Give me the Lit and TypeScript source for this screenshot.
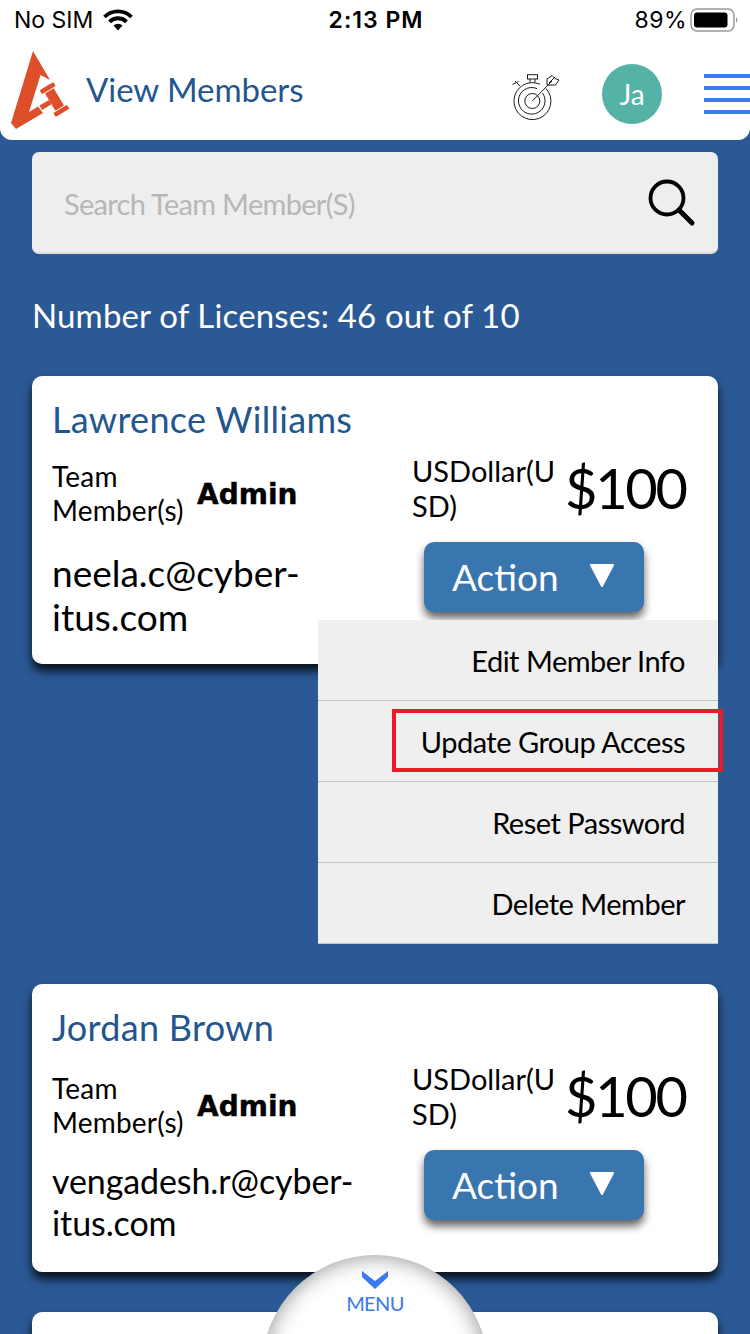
import { LitElement, html, css, svg } from "lit";
import { customElement } from "lit/decorators.js";

type Member = { name: string; email: string; open?: boolean; shifted?: boolean };

const MEMBERS: Member[] = [
  { name: "Lawrence Williams", email: "neela.c@cyber-itus.com", open: true },
  { name: "Jordan Brown", email: "vengadesh.r@cyber-itus.com", shifted: true },
];

const MENU_ITEMS = ["Edit Member Info", "Update Group Access", "Reset Password", "Delete Member"];

const logo = svg`
  <path fill="#dd4f2b" d="M33 51 L50 80 L40.500 75 L29 112 L38 106.500 L43 113 L16 129 L11 123 Z" />
  <g transform="translate(54.5 99.5) rotate(-31)" fill="#dd4f2b">
    <rect x="-5" y="-10" width="10" height="20" />
    <rect x="-8" y="-15.5" width="16" height="4.5" rx="1" />
    <rect x="-8" y="11" width="16" height="4.5" rx="1" />
    <rect x="-16" y="-2.500" width="11" height="5" />
  </g>`;

const target = svg`
  <g fill="none" stroke="#1c1c1c" stroke-width="1">
    <path d="M546 88.5 A18.5 18.5 0 1 1 540 84.2" />
    <path d="M542.5 93 A13.3 13.3 0 1 1 537 88.6" />
    <circle cx="532.3" cy="101" r="7.5" />
    <rect x="527.5" y="74.7" width="10" height="4.3" />
    <path d="M530 79 V82.5 M535 79 V82.5" />
    <path d="M520 86 L515 81 M512.5 84.5 L518.5 81.5" />
    <path d="M532.3 101 L552 81" />
    <path d="M547 85 L547 79 L552 75.5 L555 78.5 L559 80 L555.5 85 L550 85 Z" />
    <path d="M549 83 L555 77" />
  </g>`;

@customElement("app-root")
export class AppRoot extends LitElement {
  static styles = css`
    :host {
      display: block;
      position: relative;
      width: 750px;
      height: 1334px;
      overflow: hidden;
      background: #2a5995;
      font-family: "Lato", "Liberation Sans", sans-serif;
      color: #000;
    }
    header {
      background: #fff;
      height: 140px;
      border-radius: 0 0 12px 12px;
    }
    .status {
      height: 40px;
      display: grid;
      grid-template-columns: 1fr auto 1fr;
      align-items: center;
      padding: 0 12px 0 14px;
      font-family: "Inter", "Liberation Sans", sans-serif;
      font-size: 23px;
      color: #000;
    }
    .status .left,
    .status .right {
      display: flex;
      align-items: center;
      gap: 10px;
    }
    .status .right {
      justify-content: flex-end;
      gap: 3px;
      letter-spacing: 0.5px;
    }
    .status .time {
      font-weight: 600;
      letter-spacing: 1px;
    }
    .nav {
      height: 100px;
      display: flex;
      align-items: center;
      position: relative;
    }
    .logo {
      width: 64px;
      height: 84px;
      margin: 0 0 0 8px;
      flex: none;
    }
    .title {
      font-size: 33px;
      color: #23568f;
      margin-left: 14px;
      letter-spacing: -0.05px;
      margin-top: -2px;
      flex: 1;
    }
    .target {
      width: 60px;
      height: 60px;
      flex: none;
      margin-top: 10px;
    }
    .avatar {
      width: 60px;
      height: 60px;
      border-radius: 50%;
      background: #54b2a6;
      color: #fff;
      font-size: 28px;
      display: flex;
      align-items: center;
      justify-content: center;
      margin: 8px 0 0 37px;
      flex: none;
    }
    .burger {
      width: 46px;
      margin: 8px 0 0 42px;
      display: flex;
      flex-direction: column;
      gap: 8px;
      flex: none;
    }
    .burger span {
      height: 4px;
      background: #3b7af0;
    }
    main {
      padding: 12px 32px 0;
    }
    .search {
      height: 102px;
      background: #eee;
      border-radius: 7px;
      border-bottom: 2px solid #e0e0e0;
      box-sizing: border-box;
      display: flex;
      align-items: center;
      justify-content: space-between;
      padding: 0 20px 0 32px;
    }
    .search span {
      font-size: 29px;
      color: #b7b7b7;
      letter-spacing: -0.7px;
      margin-top: 2px;
    }
    .search svg {
      width: 52px;
      height: 52px;
    }
    .licenses {
      color: #fff;
      font-size: 33px;
      line-height: 40px;
      margin: 41px 0 41px;
      letter-spacing: 0.15px;
    }
    .card {
      position: relative;
      background: #fff;
      border-radius: 10px;
      height: 288px;
      box-sizing: border-box;
      padding: 23px 20px;
      margin-bottom: 40px;
      box-shadow: 0 7px 10px rgba(0, 0, 0, 0.8);
    }
    .card.open {
      margin-bottom: 320px;
    }
    .name {
      font-size: 36px;
      line-height: 40px;
      color: #23568f;
      letter-spacing: 0.3px;
    }
    .body {
      display: grid;
      grid-template-columns: 360px 1fr;
    }
    .role {
      display: flex;
      align-items: center;
      margin-top: 20px;
      height: 68px;
    }
    .role .label {
      width: 145px;
      font-size: 28px;
      line-height: 34px;
      letter-spacing: 0.2px;
    }
    .role b {
      font-family: "DejaVu Sans", sans-serif;
      font-size: 28px;
      font-weight: 700;
      margin-top: 2px;
      -webkit-text-stroke: 0.4px #000;
    }
    .email {
      width: 310px;
      font-size: 37px;
      line-height: 44px;
      margin-top: 24px;
    }
    .shifted .role {
      margin-top: 24px;
      margin-bottom: -3px;
    }
    .shifted .email {
      line-height: 42px;
      width: 330px;
      font-size: 34px;
      letter-spacing: -0.1px;
    }
    .amount {
      display: flex;
      align-items: center;
      margin-top: 14px;
    }
    .currency {
      width: 145px;
      flex: none;
      font-size: 29px;
      line-height: 35px;
      word-break: break-all;
    }
    .price {
      font-size: 56px;
      margin-left: 8px;
      line-height: 70px;
      letter-spacing: -2.300px;
    }
    .action {
      width: 220px;
      height: 70px;
      box-sizing: border-box;
      margin: 19px 0 0 12px;
      background: #3975ae;
      border-radius: 10px;
      color: #fff;
      font-size: 37px;
      display: flex;
      align-items: center;
      padding: 0 0 2px 28px;
      box-shadow: 0 6px 9px rgba(0, 0, 0, 0.62);
    }
    .action svg {
      width: 26px;
      height: 26px;
      margin-left: 30px;
      margin-top: -2px;
    }
    .dropdown {
      position: absolute;
      top: 244px;
      right: 0;
      width: 400px;
      background: #efefef;
      z-index: 2;
    }
    .dropdown div {
      height: 81px;
      box-sizing: border-box;
      border-bottom: 1px solid #c4c4c4;
      display: flex;
      align-items: center;
      justify-content: flex-end;
      padding-right: 33px;
      font-size: 29px;
      letter-spacing: -0.5px;
    }
    .highlight {
      position: absolute;
      left: 74px;
      top: 89px;
      width: 331px;
      height: 63px;
      box-sizing: border-box;
      border: 4px solid #ed1c24;
      z-index: 3;
    }
    .menu {
      position: absolute;
      left: 262px;
      top: 1255px;
      width: 226px;
      height: 226px;
      border-radius: 50%;
      background: #fff;
      box-shadow: inset 0 0 22px rgba(0, 0, 0, 0.45);
      z-index: 4;
      display: flex;
      flex-direction: column;
      align-items: center;
      padding-top: 15px;
      box-sizing: border-box;
      color: #3b7af0;
      font-size: 20px;
    }
    .menu svg {
      width: 28px;
      height: 20px;
    }
    .menu span {
      margin-top: 1px;
      line-height: 24px;
      letter-spacing: -0.6px;
    }
  `;

  private renderCard(m: Member) {
    const cls = `card ${m.open ? "open" : ""} ${m.shifted ? "shifted" : ""}`;
    return html`
      <section class=${cls}>
        <div class="name">${m.name}</div>
        <div class="body">
          <div>
            <div class="role">
              <div class="label">Team<br />Member(s)</div>
              <b>Admin</b>
            </div>
            <div class="email">${m.email}</div>
          </div>
          <div>
            <div class="amount">
              <div class="currency">USDollar(USD)</div>
              <div class="price">$100</div>
            </div>
            <div class="action">
              Action
              <svg viewBox="0 0 26 26">
                <path d="M2 3 H24 L13 24 Z" fill="#fff" stroke="#fff" stroke-width="2" stroke-linejoin="round" />
              </svg>
            </div>
          </div>
        </div>
        ${m.open
          ? html`<div class="dropdown">
              ${MENU_ITEMS.map((item) => html`<div>${item}</div>`)}
              <span class="highlight"></span>
            </div>`
          : ""}
      </section>
    `;
  }

  render() {
    return html`
      <header>
        <div class="status">
          <div class="left">
            <span>No SIM</span>
            <svg width="30" height="22" viewBox="0 0 30 22">
              <path d="M15 21.500 L10.500 16.500 A6.500 6.500 0 0 1 19.500 16.500 Z" fill="#000" />
              <path d="M6.500 12.800 A12 12 0 0 1 23.500 12.800 M1.500 8 A19 19 0 0 1 28.500 8" fill="none" stroke="#000" stroke-width="3.800" />
            </svg>
          </div>
          <div class="time">2:13 PM</div>
          <div class="right">
            <span>89%</span>
            <svg width="48" height="26" viewBox="0 0 48 26">
              <rect x="1" y="2" width="43" height="22" rx="6" fill="none" stroke="#999" stroke-width="1.500" />
              <rect x="4" y="5.500" width="33.500" height="15" rx="3" fill="#000" />
              <path d="M46 10 A4 4 0 0 1 46 16 Z" fill="#999" />
            </svg>
          </div>
        </div>
        <div class="nav">
          <svg class="logo" viewBox="8 48 64 84">${logo}</svg>
          <div class="title">View Members</div>
          <svg class="target" viewBox="505 65 60 60">${target}</svg>
          <div class="avatar">Ja</div>
          <div class="burger"><span></span><span></span><span></span><span></span></div>
        </div>
      </header>
      <main>
        <div class="search">
          <span>Search Team Member(S)</span>
          <svg viewBox="0 0 52 52">
            <circle cx="21" cy="22" r="16.500" fill="none" stroke="#000" stroke-width="3.800" />
            <path d="M33 34 L46 47" stroke="#000" stroke-width="5" stroke-linecap="round" />
          </svg>
        </div>
        <div class="licenses">Number of Licenses: 46 out of 10</div>
        ${MEMBERS.map((m) => this.renderCard(m))}
        <section class="card"></section>
      </main>
      <div class="menu">
        <svg viewBox="0 0 28 20"><path d="M1 1 L14 11 L27 1 V7 L14 19 L1 7 Z" fill="#3b7af0" /></svg>
        <span>MENU</span>
      </div>
    `;
  }
}
